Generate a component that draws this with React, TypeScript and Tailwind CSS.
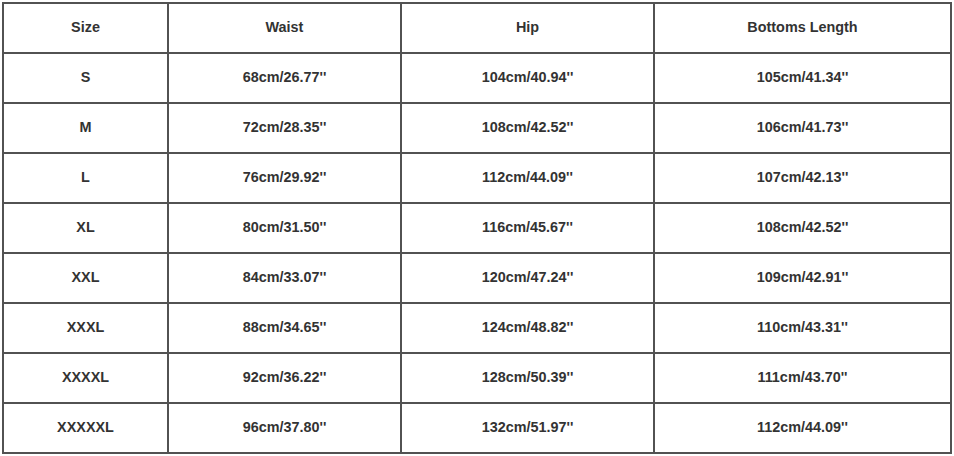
import React from "react";

const header = ["Size", "Waist", "Hip", "Bottoms Length"];
const rows: string[][] = [
  ["S", "68cm/26.77''", "104cm/40.94''", "105cm/41.34''"],
  ["M", "72cm/28.35''", "108cm/42.52''", "106cm/41.73''"],
  ["L", "76cm/29.92''", "112cm/44.09''", "107cm/42.13''"],
  ["XL", "80cm/31.50''", "116cm/45.67''", "108cm/42.52''"],
  ["XXL", "84cm/33.07''", "120cm/47.24''", "109cm/42.91''"],
  ["XXXL", "88cm/34.65''", "124cm/48.82''", "110cm/43.31''"],
  ["XXXXL", "92cm/36.22''", "128cm/50.39''", "111cm/43.70''"],
  ["XXXXXL", "96cm/37.80''", "132cm/51.97''", "112cm/44.09''"],
];

export default function App() {
  const all = [header, ...rows];
  return (
    <div className="w-[954px] h-[456px] bg-white pl-[2px] pt-[2px]">
      <div
        className="grid w-[950px] grid-cols-[163px_231px_251px_295px] auto-rows-[48px] gap-[2px] bg-[#525252] p-[2px] text-[#333333] font-bold text-[14.4px]"
        style={{ fontFamily: '"Liberation Sans", Arial, sans-serif' }}
      >
        {all.map((r, i) =>
          r.map((c, j) => (
            <div key={`${i}-${j}`} className="bg-white flex items-center justify-center">
              {c}
            </div>
          ))
        )}
      </div>
    </div>
  );
}
